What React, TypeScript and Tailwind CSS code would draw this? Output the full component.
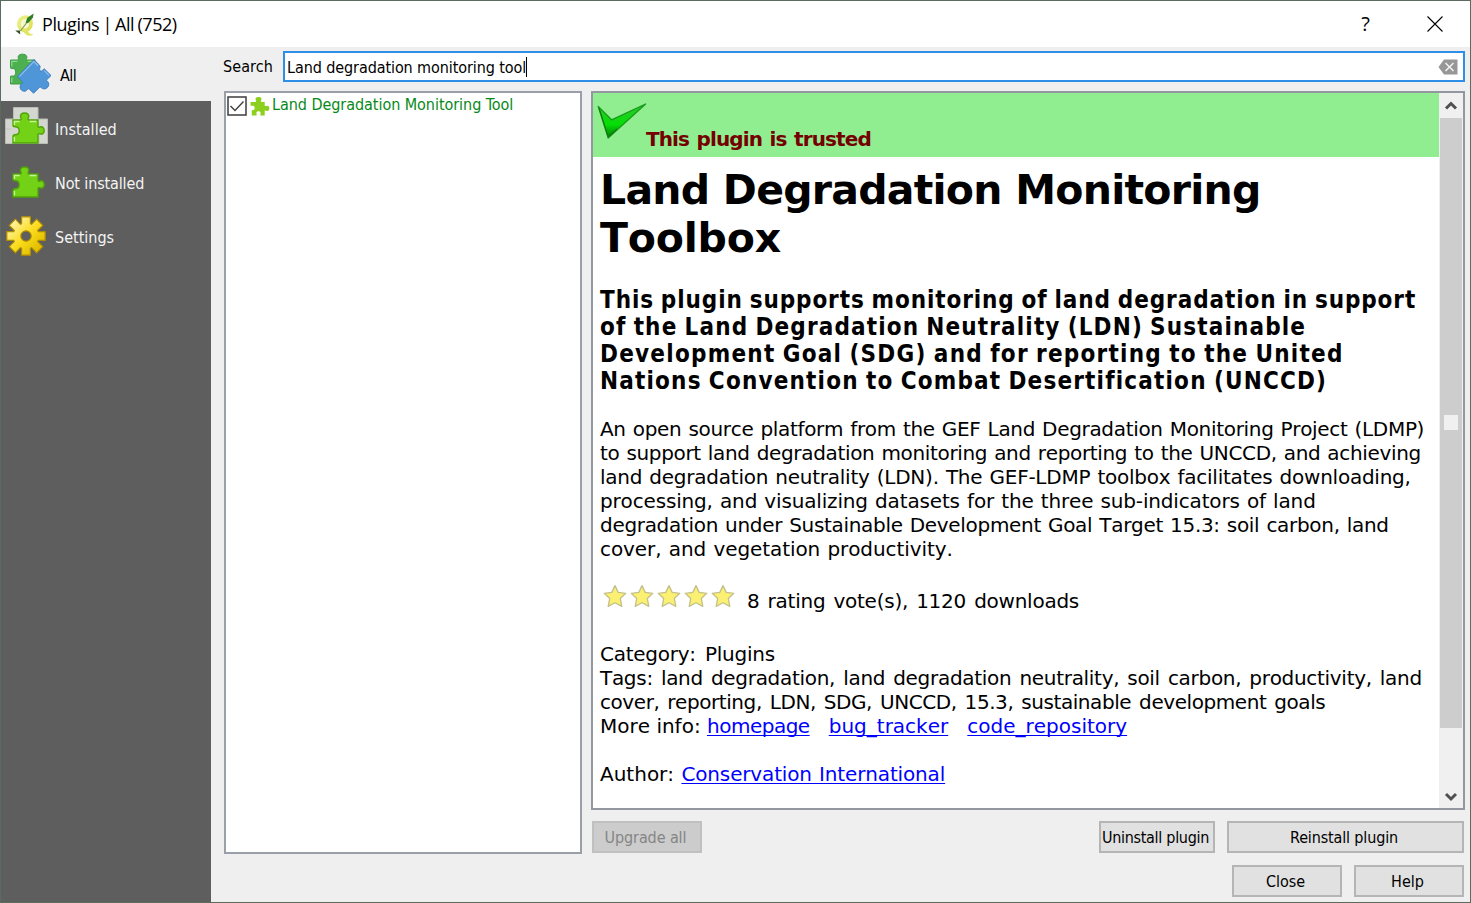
import React from 'react';

const PUZZLE =
  'M2 8 H8.4 C10.2 8 10.8 7.2 9.8 5.6 C8.4 2.8 10.8 1 13.6 1 C16.4 1 18.8 2.8 17.4 5.6 C16.4 7.2 17 8 18.8 8 H27 V14 C27 15.6 28 15.4 29 15 C32 14.2 33.2 16.4 33.2 18.6 C33.2 20.8 31.6 22.8 29 21.8 C28 21.4 27 21.6 27 23 V31 H2 V24.6 C2 23 2.8 22.8 4.2 22.8 C7 22.8 8.2 21 8.2 18.8 C8.2 16.6 7 14.8 4.2 14.8 C2.8 14.8 2 14.4 2 13 Z';

function GreenPuzzle({ className }: { className: string }) {
  return (
    <svg viewBox="0 0 34 32" className={className}>
      <path d={PUZZLE} fill="#74d216" stroke="#4fa30a" strokeWidth="1.4" />
      <path d="M3.4 13 V9.5 H8.6 M18.6 9.5 H25.4 M3.4 25 V29.5" fill="none" stroke="#c8f59a" strokeWidth="1.4" />
    </svg>
  );
}

function AllIcon() {
  return (
    <svg viewBox="0 0 42 42" className="h-[42px] w-[42px]">
      <path
        d="M1.5 7 H8 C11 7 8.4 5 9.4 3 C10.6 .6 16.4 .6 17.6 3 C18.6 5 16 7 19 7 H26 V31 H1.5 V24 C1.5 22 3.5 23.5 5 23 C7.2 22 7.2 16.5 5 15.6 C3.5 15 1.5 16.4 1.5 14.6 Z"
        fill="#4cb050"
        stroke="#3a9a48"
      />
      <path d="M2.8 13.5 V8.4 H8.4 M18.6 8.4 H24 M2.8 24.5 V29.5" fill="none" stroke="#8fdc8c" strokeWidth="1.2" />
      <path
        d="M24.8 6.6 L30.5 12.2 C31.8 13.6 30.6 15 30.6 16.4 C30.8 18.4 32.4 18.4 33.4 17.4 L35.2 15.8 L42 22.5 L38 26.6 C36.8 28 38.6 28 39.4 29.4 C40.8 33 37.6 37 33.6 35.6 C32.2 35 31.6 33.2 30.2 34.6 L24.6 40.2 L20.4 36.2 C19 34.8 18.4 37.6 16 38.2 C12.4 38.6 10 35 11.6 32 C12.6 30.4 14.6 30.4 13.4 29 L8.4 23.6 Z"
        fill="#4f96d8"
        stroke="#3f7fc0"
      />
      <path d="M10.4 23.4 L24.8 8.6 L29 12.8" fill="none" stroke="#8dbfe9" strokeWidth="1.3" />
      <path d="M35.2 17.6 L40 22.4" fill="none" stroke="#8dbfe9" strokeWidth="1.2" />
    </svg>
  );
}

function InstalledIcon() {
  return (
    <div className="mb-[4px] grid h-[38px] w-[43px]">
      <svg viewBox="0 0 43 38" className="col-start-1 row-start-1 h-[38px] w-[43px]">
        <path d="M8.5 .5 H33 V12 H42.5 V36.5 H.5 V12 H8.5 Z" fill="#d3d7cf" stroke="#b9bdb5" />
        <path d="M1 22 H6 M9 26 V36 M34 36 V25" fill="none" stroke="#bfc3bb" />
      </svg>
      <GreenPuzzle className="col-start-1 row-start-1 mt-[5px] ml-[6px] h-[32px] w-[34px]" />
    </div>
  );
}

function GearIcon() {
  return (
    <svg viewBox="-20 -20 40 40" className="h-[40px] w-[40px]">
      <defs>
        <linearGradient id="gold" x1="0" y1="0" x2="1" y2="1">
          <stop offset="0.15" stopColor="#fff3a0" />
          <stop offset="0.5" stopColor="#fbdc1e" />
          <stop offset="0.8" stopColor="#e2c000" />
        </linearGradient>
      </defs>
      <path
        fillRule="evenodd"
        d="M-4.4 -19.2 H4.4 V-12.2 L5.5 -11.7 L10.6 -16.8 L16.8 -10.6 L11.7 -5.5 L12.2 -4.4 H19.2 V4.4 H12.2 L11.7 5.5 L16.8 10.6 L10.6 16.8 L5.5 11.7 L4.4 12.2 V19.2 H-4.4 V12.2 L-5.5 11.7 L-10.6 16.8 L-16.8 10.6 L-11.7 5.5 L-12.2 4.4 H-19.2 V-4.4 H-12.2 L-11.7 -5.5 L-16.8 -10.6 L-10.6 -16.8 L-5.5 -11.7 L-4.4 -12.2 Z M5.2 0 A5.2 5.2 0 1 0 -5.2 0 A5.2 5.2 0 1 0 5.2 0 Z"
        fill="url(#gold)"
        stroke="#b08c00"
        strokeWidth="1.2"
        strokeLinejoin="round"
      />
    </svg>
  );
}

function AppLogo() {
  return (
    <svg viewBox="0 0 21 25" className="h-[25px] w-[21px]">
      <defs>
        <linearGradient id="ring" x1="0" y1="0" x2="1" y2="1">
          <stop offset="0" stopColor="#eef08c" />
          <stop offset="1" stopColor="#dcde52" />
        </linearGradient>
      </defs>
      <path d="M11.4 5.2 C7.4 5.2 4.9 8.2 4.9 12 C4.9 15.8 7.2 18.4 10.4 18.4 C14.4 18.4 17 15.2 17 11.2 C17 7.6 14.8 5.2 11.4 5.2 Z" fill="#f6f8cf" stroke="url(#ring)" strokeWidth="3.8" />
      <path d="M8.8 17.6 L13 17 C14 20.4 16 22.2 19.4 22.4 C16 24.6 10.4 24.4 8.8 17.6 Z" fill="#e3e566" />
      <path d="M1.2 18.4 L6 18.6 L6.2 22.6 C4.4 21 3 19.6 1.2 18.4 Z" fill="#33502c" />
      <path d="M6.4 19 L14 9" stroke="#7c9a5e" strokeWidth="1.2" />
      <path d="M11.6 10.6 L13.4 5.8 L19.6 1.4 L19 5.4 L14 11.2 Z" fill="#2f7d28" />
    </svg>
  );
}

function TrustedCheck() {
  return (
    <svg viewBox="0 0 50 38" className="h-[38px] w-[50px]">
      <defs>
        <linearGradient id="tick" x1="0" y1="0" x2="0" y2="1">
          <stop offset="0" stopColor="#2fc42f" />
          <stop offset="0.6" stopColor="#05df05" />
          <stop offset="1" stopColor="#067806" />
        </linearGradient>
      </defs>
      <path d="M1.2 4.4 L14.6 17.8 L48.6 2 L11.2 36 Z" fill="url(#tick)" stroke="#1a9a1a" strokeWidth="1.3" strokeLinejoin="round" />
      <path d="M2 6 L11.2 35 L20 27" fill="none" stroke="#0f7a0f" strokeWidth="1.1" />
    </svg>
  );
}

function Star() {
  return (
    <svg viewBox="0 0 24 24" className="h-[24px] w-[24px]">
      <path
        d="M12 1.6 L15.2 8.4 L22.8 9.3 L17.3 14.4 L18.8 22.4 L12 18.8 L5.2 22.4 L6.7 14.4 L1.2 9.3 L8.8 8.4 Z"
        fill="#fbf072"
        stroke="#c4c08c"
        strokeWidth="1.3"
        strokeLinejoin="round"
      />
    </svg>
  );
}

const UI = "font-['DejaVu_Sans_Condensed','DejaVu_Sans',sans-serif]";

function NavItem({ icon, label, tracking }: { icon: React.ReactNode; label: string; tracking: string }) {
  return (
    <div className="flex h-[54px] items-center text-[#f4f4f4]">
      <div className="flex w-[54px] shrink-0 items-center pl-[4px]">{icon}</div>
      <span className={`mt-[3px] whitespace-nowrap text-[16px] leading-[20px] ${tracking}`}>{label}</span>
    </div>
  );
}

function Button({ label, className }: { label: string; className: string }) {
  return (
    <button className={`flex items-center justify-center whitespace-nowrap border-2 pr-[3px] pt-px text-[16px] leading-[20px] ${className}`}>
      {label}
    </button>
  );
}

function Line({ children, className = '' }: { children: React.ReactNode; className?: string }) {
  return <div className={`whitespace-pre ${className}`}>{children}</div>;
}

function Link({ children, className = '' }: { children: React.ReactNode; className?: string }) {
  return (
    <a className={`text-[#0000ff] underline decoration-1 underline-offset-[2px] [text-decoration-skip-ink:none] ${className}`}>{children}</a>
  );
}

export default function App() {
  return (
    <div className={`flex h-[903px] w-[1471px] flex-col overflow-hidden border border-[#5c6b5f] bg-[#efefef] text-black ${UI}`}>
      <header className="flex h-[46px] shrink-0 items-center bg-white pl-[13px]">
        <AppLogo />
        <span className="ml-[7px] font-['Open_Sans','Noto_Sans',sans-serif] text-[18px] tracking-[-0.45px] [word-spacing:-1px]">Plugins | All (752)</span>
        <span className="ml-auto mr-[57px] font-['Open_Sans',sans-serif] text-[20px]">?</span>
        <svg viewBox="0 0 16 16" className="mr-[27px] h-[16px] w-[16px]">
          <path d="M.5 .5 L15.5 15.5 M15.5 .5 L.5 15.5" stroke="#000" strokeWidth="1.1" />
        </svg>
      </header>

      <div className="flex min-h-0 flex-1">
        <nav className="flex w-[210px] shrink-0 flex-col bg-[#5e5e5e]">
          <div className="flex h-[54px] items-center bg-[#efefef] pl-[8px]">
            <AllIcon />
            <span className="ml-[9px] mt-[3px] text-[16px] tracking-[-0.5px]">All</span>
          </div>
          <NavItem icon={<InstalledIcon />} label="Installed" tracking="tracking-[0.05px]" />
          <NavItem icon={<GreenPuzzle className="ml-[6px] h-[32px] w-[34px]" />} label="Not installed" tracking="tracking-[-0.13px]" />
          <NavItem icon={<div className="ml-px"><GearIcon /></div>} label="Settings" tracking="tracking-[0px]" />
        </nav>

        <main className="flex min-w-0 flex-1 flex-col pl-[12px] pr-[5px] pt-[4px]">
          <div className="flex h-[31px] shrink-0 items-center">
            <span className="w-[60px] text-[16px] tracking-[0.1px]">Search</span>
            <div className="flex h-[31px] flex-1 items-center border-2 border-[#2d8fe6] bg-white pl-[2px] pr-[5px]">
              <span className="mt-[3px] whitespace-nowrap text-[16px] leading-[20px] tracking-[-0.09px]">Land degradation monitoring tool</span>
              <span className="h-[20px] w-px bg-black" />
              <svg viewBox="0 0 20 16" className="ml-auto h-[16px] w-[20px]">
                <path d="M6 .5 H19.5 V15.5 H6 L.5 8 Z" fill="#979797" />
                <path d="M7.5 4 L15.5 12 M15.5 4 L7.5 12" stroke="#f4f4f4" strokeWidth="1.5" />
              </svg>
            </div>
          </div>

          <div className="mt-[9px] flex pl-px">
            <section className="h-[763px] w-[358px] shrink-0 border-2 border-[#9ba0a8] bg-white">
              <div className="flex h-[22px] items-center pl-px">
                <svg viewBox="0 0 20 20" className="mt-[3px] h-[20px] w-[20px]">
                  <rect x="1" y="1" width="18" height="18" fill="#fff" stroke="#3c3c3c" strokeWidth="1.5" />
                  <path d="M3.5 10 L8 14.5 L16.5 5.5" fill="none" stroke="#444" strokeWidth="1.5" />
                </svg>
                <svg viewBox="0 0 34 34" className="ml-[3px] mt-[4px] h-[20px] w-[20px]">
                  <path
                    d="M1 10 H9 C12 10 9.5 7.5 9.5 5 C9.5 .5 19.5 .5 19.5 5 C19.5 7.5 17.5 10 19.5 10 H25 V16 C25 18 27.5 16.4 29.5 16.4 C34 16.4 34 25.6 29.5 25.6 C27.5 25.6 25 23 25 25 V33 H18 C16.5 33 18.5 30 18 28 C17 25 12 25 11 28 C10.5 30 12.5 33 11 33 H3 V24 C5 24 8 24.5 8 20.5 C8 16.5 5 16.5 1 17 Z"
                    fill="#8ccf1c"
                  />
                </svg>
                <span className="ml-[2px] mt-px whitespace-nowrap text-[16px] leading-[21px] tracking-[-0.05px] text-[#078a18]">
                  Land Degradation Monitoring Tool
                </span>
              </div>
            </section>

            <div className="ml-[9px] flex w-[874px] flex-col">
              <section className="flex h-[719px] border-2 border-[#9398a0] bg-white font-['DejaVu_Sans',Verdana,sans-serif] [font-kerning:none]">
                <div className="flex w-[846px] flex-col">
                  <div className="flex h-[64px] shrink-0 bg-[#90ee90] pl-[4px] pt-[9px]">
                    <TrustedCheck />
                    <span className="-ml-px mt-[24px] whitespace-nowrap text-[20px] font-bold leading-[26px] tracking-[-0.9px] text-[#740000] [word-spacing:1.5px]">
                      This plugin is trusted
                    </span>
                  </div>
                  <div className="pl-[7px]">
                    <h1 className="mt-[9px] text-[41px] font-bold leading-[48px]">
                      <Line className="tracking-[-0.75px]">Land Degradation Monitoring</Line>
                      <Line className="tracking-[-0.2px]">Toolbox</Line>
                    </h1>
                    <h2 className="mt-[25px] font-['DejaVu_Sans_Condensed'] text-[24px] font-bold leading-[27px] [word-spacing:-1.5px]">
                      <Line className="tracking-[0.9px]">This plugin supports monitoring of land degradation in support</Line>
                      <Line className="tracking-[1.14px]">of the Land Degradation Neutrality (LDN) Sustainable</Line>
                      <Line className="tracking-[1.24px]">Development Goal (SDG) and for reporting to the United</Line>
                      <Line className="tracking-[1.18px]">Nations Convention to Combat Desertification (UNCCD)</Line>
                    </h2>
                    <div className="mt-[22px] text-[20px] leading-[24px] [word-spacing:1px]">
                      <Line className="tracking-[-0.32px]">An open source platform from the GEF Land Degradation Monitoring Project (LDMP)</Line>
                      <Line className="tracking-[-0.34px]">to support land degradation monitoring and reporting to the UNCCD, and achieving</Line>
                      <Line className="tracking-[-0.24px]">land degradation neutrality (LDN). The GEF-LDMP toolbox facilitates downloading,</Line>
                      <Line className="tracking-[-0.16px]">processing, and visualizing datasets for the three sub-indicators of land</Line>
                      <Line className="tracking-[-0.31px]">degradation under Sustainable Development Goal Target 15.3: soil carbon, land</Line>
                      <Line className="tracking-[-0.08px]">cover, and vegetation productivity.</Line>
                    </div>
                    <div className="mt-[23px] flex h-[30px] gap-[3px] pl-[3px]">
                      <Star />
                      <Star />
                      <Star />
                      <Star />
                      <Star />
                      <Line className="ml-[9px] mt-[5px] text-[20px] leading-[24px] tracking-[-0.25px] [word-spacing:2px]">
                        8 rating vote(s), 1120 downloads
                      </Line>
                    </div>
                    <div className="mt-[28px] text-[20px] leading-[24px] [word-spacing:1px]">
                      <Line className="tracking-[-0.25px] [word-spacing:3px]">Category: Plugins</Line>
                      <Line className="tracking-[-0.3px] [word-spacing:2px]">Tags: land degradation, land degradation neutrality, soil carbon, productivity, land</Line>
                      <Line className="tracking-[-0.43px] [word-spacing:2px]">cover, reporting, LDN, SDG, UNCCD, 15.3, sustainable development goals</Line>
                      <Line className="[word-spacing:0px]">
                        More info: <Link className="tracking-[-0.5px]">homepage</Link>
                        {'   '}
                        <Link>bug_tracker</Link>
                        {'   '}
                        <Link>code_repository</Link>
                      </Line>
                      <Line className="mt-[24px]">
                        Author: <Link className="tracking-[-0.15px]">Conservation International</Link>
                      </Line>
                    </div>
                  </div>
                </div>
                <div className="ml-auto flex w-[24px] flex-col items-center bg-[#f0f0f0]">
                  <svg viewBox="0 0 24 25" className="h-[25px] w-[24px] shrink-0">
                    <path d="M7 15.5 L12 10.5 L17 15.5" fill="none" stroke="#505050" strokeWidth="3" />
                  </svg>
                  <div className="h-[610px] w-[22px] shrink-0 bg-[#cdcdcd] pl-[4px] pt-[297px]">
                    <div className="h-[15px] w-[14px] bg-[#f0f0f0]" />
                  </div>
                  <svg viewBox="0 0 24 25" className="mt-auto h-[25px] w-[24px] shrink-0">
                    <path d="M7 11 L12 16 L17 11" fill="none" stroke="#505050" strokeWidth="3" />
                  </svg>
                </div>
              </section>
              <div className="mt-[11px] flex pl-px pr-px">
                <Button label="Upgrade all" className="h-[32px] w-[110px] border-[#c0c0c0] bg-[#cccccc] tracking-[-0.1px] text-[#858585]" />
                <Button label="Uninstall plugin" className="ml-auto h-[32px] w-[116px] border-[#b5b5b5] bg-[#e1e1e1] tracking-[-0.3px]" />
                <Button label="Reinstall plugin" className="ml-[12px] h-[32px] w-[237px] border-[#b5b5b5] bg-[#e1e1e1] tracking-[-0.15px]" />
              </div>
            </div>
          </div>
          <div className="mt-[11px] flex justify-end gap-[12px] pr-px">
            <Button label="Close" className="h-[32px] w-[110px] border-[#b5b5b5] bg-[#e1e1e1] tracking-[0px]" />
            <Button label="Help" className="h-[32px] w-[110px] border-[#b5b5b5] bg-[#e1e1e1] tracking-[0px]" />
          </div>
        </main>
      </div>
    </div>
  );
}
